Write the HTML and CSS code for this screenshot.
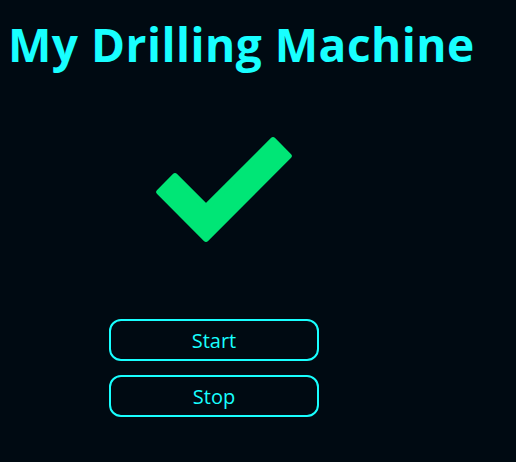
FILE: index.html
```html
<!DOCTYPE html>
<html>
<head>
<meta charset="utf-8">
<link rel="stylesheet" href="styles.css">
</head>
<body>
<h1 class="title">My Drilling Machine</h1>
<div class="status">
<svg class="check" width="150" height="120" viewBox="0 0 150 120">
<polygon points="9.24,61 56,107.76 138.76,25 123,9.24 56,76.24 25,45.24" fill="#00e676" stroke="#00e676" stroke-width="6" stroke-linejoin="round"/>
</svg>
</div>
<div class="actions">
<button class="btn">Start</button>
<button class="btn">Stop</button>
</div>
</body>
</html>
```
FILE: styles.css
```css
html, body {
  margin: 0;
  padding: 0;
  background: #000a12;
  height: 100%;
}
body {
  font-family: "Open Sans", "Noto Sans", sans-serif;
  padding: 0 8px;
}
.title {
  margin: 14px 0 0 0;
  font-size: 46px;
  line-height: 60px;
  font-weight: 700;
  color: #18ffff;
  letter-spacing: 0.5px;
}
.status {
  padding-left: 142px;
  margin-top: 57px;
}
.check {
  display: block;
}
.actions {
  margin-top: 68px;
  margin-left: 101px;
  display: flex;
  flex-direction: column;
  gap: 14px;
  width: 210px;
}
.btn {
  height: 42px;
  background: transparent;
  border: 2px solid #18ffff;
  border-radius: 12px;
  color: #18ffff;
  font-family: "Open Sans", "Noto Sans", sans-serif;
  font-size: 20px;
  padding: 2px 0 0 0;
  line-height: 36px;
}
```
